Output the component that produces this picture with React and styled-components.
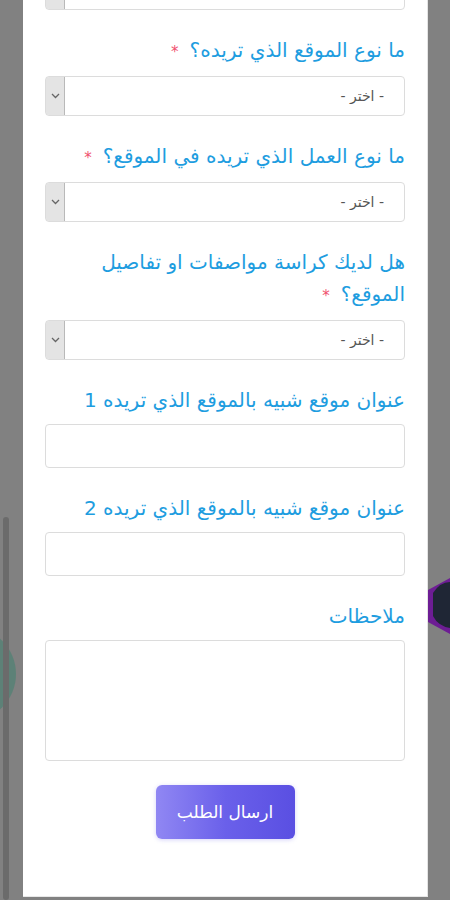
import React from 'react';
import styled, { createGlobalStyle } from 'styled-components';

const GlobalStyle = createGlobalStyle`
  html, body {
    margin: 0;
    padding: 0;
    height: 100%;
    overflow: hidden;
  }
  body {
    font-family: "DejaVu Sans", "Noto Sans", sans-serif;
    background: #818181;
  }
`

const Screen = styled.div`
  position: relative;
  width: 450px;
  height: 900px;
  overflow: hidden;
  background: #818181;
  display: flex;
  justify-content: center;
`

const ScrollTrack = styled.div`
  position: absolute;
  left: 3px;
  top: 517px;
  width: 6px;
  height: 383px;
  border-radius: 3px;
  background: #6b6b6b;
`

const TealBlob = styled.div`
  position: absolute;
  left: -78px;
  top: 627px;
  width: 94px;
  height: 94px;
  border-radius: 50%;
  background: #5d8177;
`

const HexDecor = styled.svg`
  position: absolute;
  left: 428px;
  top: 576px;
`

const Panel = styled.div`
  position: relative;
  width: 405px;
  height: 897px;
  margin-left: 1px;
  background: #ffffff;
  border-right: 1px solid #e4e4e4;
  border-bottom: 1px solid #e8e8e8;
  box-sizing: border-box;
  padding: 0 22px;
  direction: rtl;
  display: flex;
  flex-direction: column;
`

const Form = styled.form`
  display: flex;
  flex-direction: column;
  gap: 24px;
  margin-top: -30px;
`

const Field = styled.div`
  display: flex;
  flex-direction: column;
  gap: 8px;
`

const Label = styled.label`
  font-size: 20px;
  line-height: 32px;
  color: #1e9de0;
  text-align: right;
`

const Star = styled.span`
  color: #f0506e;
  font-size: 15px;
  margin-right: 11px;
`

const SelectWrap = styled.div`
  display: flex;
  flex-direction: row;
  height: 40px;
  border: 1px solid #dcdcdc;
  border-radius: 4px;
  box-sizing: border-box;
  overflow: hidden;
  background: #fff;
`

const NativeSelect = styled.select`
  flex: 1;
  appearance: none;
  -webkit-appearance: none;
  border: none;
  outline: none;
  background: transparent;
  font-family: "DejaVu Sans", sans-serif;
  font-size: 14px;
  color: #555;
  padding: 0 20px 0 0;
  direction: rtl;
`

const ArrowBox = styled.div`
  width: 18px;
  display: flex;
  align-items: center;
  justify-content: center;
  background: #e4e4e4;
  border: 1px solid #b9b9b9;
  border-radius: 3px 0 0 3px;
  margin: -1px;
  color: #666;
`

const TextInput = styled.input`
  height: 44px;
  border: 1px solid #dcdcdc;
  border-radius: 4px;
  box-sizing: border-box;
  outline: none;
  font-size: 14px;
  padding: 0 12px;
`

const TextArea = styled.textarea`
  height: 121px;
  border: 1px solid #dcdcdc;
  border-radius: 4px;
  box-sizing: border-box;
  outline: none;
  resize: none;
  font-size: 14px;
  padding: 8px 12px;
`

const ButtonRow = styled.div`
  display: flex;
  justify-content: center;
  margin-top: 0;
`

const SubmitButton = styled.button`
  width: 139px;
  height: 54px;
  border: none;
  border-radius: 6px;
  background: linear-gradient(90deg, #9087f3 0%, #6a60ea 50%, #5a4fe2 100%);
  box-shadow: 0 1px 4px rgba(90, 80, 230, 0.25);
  color: #fff;
  font-family: "DejaVu Sans", sans-serif;
  font-size: 17px;
  cursor: pointer;
`

const Chevron = () => (
  <svg width="9" height="6" viewBox="0 0 9 6">
    <path d="M1 1l3.5 3.5L8 1" fill="none" stroke="#666" strokeWidth="1.3" />
  </svg>
)

const Select = ({ value }) => (
  <SelectWrap>
    <NativeSelect defaultValue={value}>
      <option>{value}</option>
    </NativeSelect>
    <ArrowBox><Chevron /></ArrowBox>
  </SelectWrap>
)

const fields = [
  { label: 'ما نوع الموقع الذي تريده؟', required: true, type: 'select' },
  { label: 'ما نوع العمل الذي تريده في الموقع؟', required: true, type: 'select' },
  { label: 'هل لديك كراسة مواصفات او تفاصيل الموقع؟', required: true, type: 'select' },
  { label: 'عنوان موقع شبيه بالموقع الذي تريده 1', type: 'input' },
  { label: 'عنوان موقع شبيه بالموقع الذي تريده 2', type: 'input' },
  { label: 'ملاحظات', type: 'textarea' }
]

const App = () => {
  return (
    <Screen>
      <GlobalStyle />
      <TealBlob />
      <ScrollTrack />
      <HexDecor width="22" height="60" viewBox="0 0 22 60">
        <path d="M0 14 L22 2 L22 58 L0 46 Z" fill="#6d1d94" />
        <path d="M5 17 Q12 6 22 6 L22 52 Q10 50 5 40 Z" fill="#1f2635" />
      </HexDecor>
      <Panel>
        <Form onSubmit={e => e.preventDefault()}>
          <Select value="نظام الدفع" />
          {fields.map((f, i) => (
            <Field key={i}>
              <Label>
                {f.label}
                {f.required && <Star>*</Star>}
              </Label>
              {f.type === 'select' && <Select value="- اختر -" />}
              {f.type === 'input' && <TextInput type="text" />}
              {f.type === 'textarea' && <TextArea />}
            </Field>
          ))}
          <ButtonRow>
            <SubmitButton type="submit">ارسال الطلب</SubmitButton>
          </ButtonRow>
        </Form>
      </Panel>
    </Screen>
  )
}

export default App;
